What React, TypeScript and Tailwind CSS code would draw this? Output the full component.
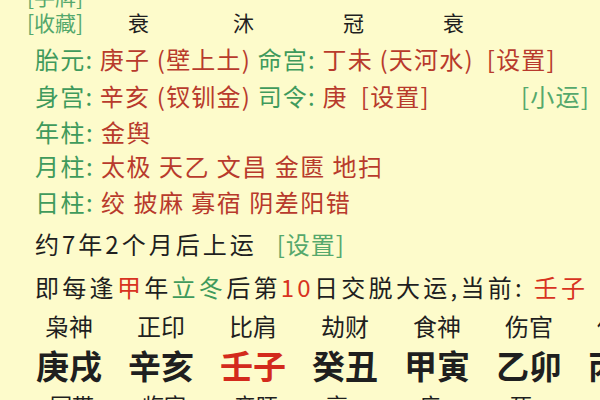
const green = "text-[#3f9a5c]";
const red = "text-[#b83a2c]";

const shishen = ["枭神", "正印", "比肩", "劫财", "食神", "伤官", "伤官"];
const ganzhi = ["庚戌", "辛亥", "壬子", "癸丑", "甲寅", "乙卯", "丙辰"];
const below = ["冠带", "临官", "帝旺", "衰", "病", "死", "墓"];

function Label({ children }: { children: string }) {
  return <span className={green}>{children}</span>;
}

export default function App() {
  return (
    <div
      className="w-[600px] h-[400px] overflow-hidden bg-[#fdfbcb] text-[#1f1f1f]"
      style={{ fontFamily: '"Noto Sans CJK SC", "Noto Sans", sans-serif' }}
    >
      {/* top toolbar rows */}
      <div className="-mt-[17px] h-[26px] flex items-center pl-[27px] text-[21px] leading-none text-[#55a86c]">[手牌]</div>
      <div className="h-[26px] flex items-center text-[21px] leading-none">
        <span className="pl-[27px] w-[128px] text-[#55a86c]">[收藏]</span>
        <span className="w-[105px]">衰</span>
        <span className="w-[110px]">沐</span>
        <span className="w-[100px]">冠</span>
        <span>衰</span>
      </div>

      {/* info block */}
      <div className="pl-[35px] text-[24px] leading-none">
        <div className="mt-[6px] h-[36px] flex items-center whitespace-pre tracking-[1.2px]">
          <Label>胎元: </Label>
          <span className={red}>庚子 (壁上土) </span>
          <Label>命宫: </Label>
          <span className={red}>丁未 (天河水)  [设置]</span>
        </div>
        <div className="h-[38px] flex items-center whitespace-pre tracking-[1.2px]">
          <Label>身宫: </Label>
          <span className={red}>辛亥 (钗钏金) </span>
          <Label>司令: </Label>
          <span className={red}>庚  [设置]</span>
          <span className="ml-auto mr-[10px] text-[#55a86c]">[小运]</span>
        </div>
        <div className="h-[34px] flex items-center whitespace-pre tracking-[1.5px]">
          <Label>年柱: </Label>
          <span className={red}>金舆</span>
        </div>
        <div className="h-[34px] flex items-center whitespace-pre tracking-[1.5px]">
          <Label>月柱: </Label>
          <span className={red}>太极 天乙 文昌 金匮 地扫</span>
        </div>
        <div className="h-[38px] flex items-center whitespace-pre tracking-[1.5px]">
          <Label>日柱: </Label>
          <span className={red}>绞 披麻 寡宿 阴差阳错</span>
        </div>
        <div className="h-[46px] flex items-center whitespace-pre tracking-[3px]">
          <span>约7年2个月后上运</span>
          <span className="ml-[20px] text-[#55a86c] tracking-[1px]">[设置]</span>
        </div>
        <div className="h-[40px] flex items-center whitespace-pre tracking-[3.3px]">
          <span>即每逢</span>
          <span className="text-[#d8331f]">甲</span>
          <span>年</span>
          <span className={green}>立冬</span>
          <span>后第</span>
          <span className="text-[#d8331f]">10</span>
          <span>日交脱大运,当前: </span>
          <span className="text-[#d8331f]">壬子</span>
        </div>
      </div>

      {/* pillars */}
      <div className="h-[38px] flex items-center pl-[45px] text-[24px] whitespace-nowrap">
        {shishen.map((s, i) => (
          <span key={i} className="w-[92px] shrink-0">{s}</span>
        ))}
      </div>
      <div className="h-[42px] flex items-center pl-[36px] text-[33px] font-bold whitespace-nowrap">
        {ganzhi.map((s, i) => (
          <span key={i} className={`w-[92px] shrink-0 ${i === 2 ? "text-[#d32a1c]" : ""}`}>{s}</span>
        ))}
      </div>
      <div className="h-[34px] flex items-center pl-[50px] text-[22px] whitespace-nowrap">
        {below.map((s, i) => (
          <span key={i} className="w-[92px] shrink-0">{s}</span>
        ))}
      </div>
    </div>
  );
}
